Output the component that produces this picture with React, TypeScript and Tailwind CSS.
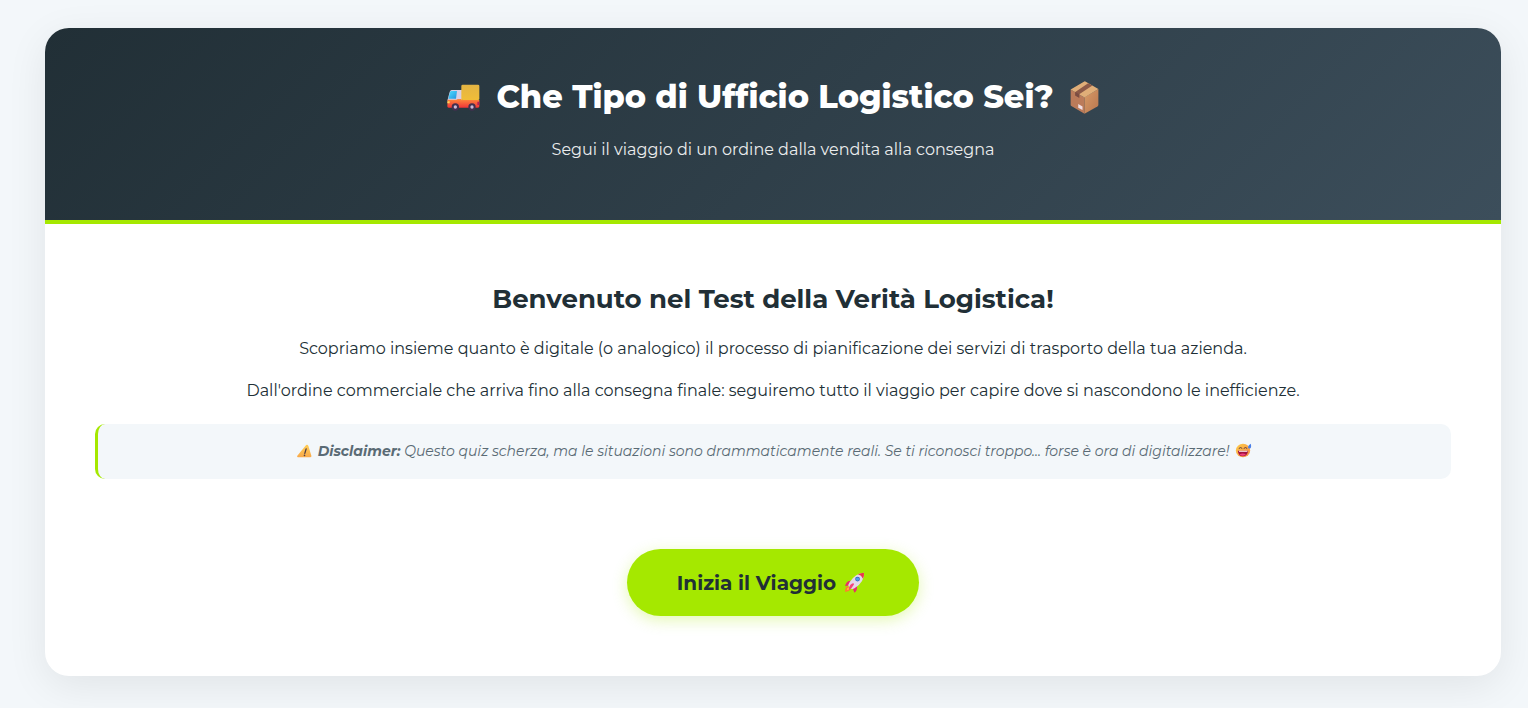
const TruckIcon = () => (
  <svg viewBox="20 46 99 81" className="h-[27px] w-[33px] shrink-0" aria-hidden="true">
    <defs>
      <linearGradient id="cargo" x1="0" y1="0" x2="0" y2="1">
        <stop offset="0" stopColor="#e3b443" />
        <stop offset="1" stopColor="#f0bd38" />
      </linearGradient>
      <linearGradient id="chassis" x1="0" y1="0" x2="0" y2="1">
        <stop offset="0" stopColor="#ff8a3c" />
        <stop offset="1" stopColor="#ef3438" />
      </linearGradient>
      <linearGradient id="glass" x1="0" y1="0" x2="1" y2="1">
        <stop offset="0" stopColor="#4fdcff" />
        <stop offset="1" stopColor="#2196e0" />
      </linearGradient>
    </defs>
    <path d="M34 64h31v32H21l7-26q2-6 6-6z" fill="#d8cfe6" />
    <path d="M33 67h17l-3 23H24l5-19q1-4 4-4z" fill="url(#glass)" />
    <path d="M22 93h26l4-2h12v3h53v19q0 4-4 4H25q-4 0-4-4z" fill="url(#chassis)" />
    <rect x="63" y="48" width="54" height="46" rx="4" fill="url(#cargo)" />
    <path d="M111 99h6v10h-6z" fill="#b81f55" />
    <path d="M21 98h7v6h-7z" fill="#ffd65a" />
    <circle cx="45" cy="115" r="11" fill="#42304f" />
    <circle cx="45" cy="115" r="5" fill="#c9bad7" />
    <circle cx="95" cy="115" r="11" fill="#42304f" />
    <circle cx="95" cy="115" r="5" fill="#c9bad7" />
  </svg>
);

const PackageIcon = () => (
  <svg viewBox="41 31 86 100" className="h-[33px] w-[29px] shrink-0" aria-hidden="true">
    <defs>
      <linearGradient id="boxRight" x1="0" y1="0" x2="1" y2="1">
        <stop offset="0" stopColor="#d89b67" />
        <stop offset="1" stopColor="#b8764f" />
      </linearGradient>
    </defs>
    <path d="M42 57l42 24v49L44 107q-2-1-2-4z" fill="#bb7b5a" />
    <path d="M126 55v48q0 3-3 5l-39 22V80z" fill="url(#boxRight)" />
    <path d="M42 57l40-24q3-2 6 0l38 22-42 26z" fill="#e0ae78" />
    <path d="M95 38l13 7-40 26v11l-12-7V64z" fill="#8d5a48" />
    <path d="M56 64l12 7v11l-12-7z" fill="#7b4c41" />
    <path d="M65 101l13 7v11l-13-7z" fill="#f1dfe5" />
  </svg>
);

const WarningIcon = () => (
  <svg viewBox="20 26 46 41" className="mr-1.5 inline h-[14px] w-[15px] align-[-2px]" aria-hidden="true">
    <defs>
      <linearGradient id="sign" x1="0" y1="0" x2="0" y2="1">
        <stop offset="0" stopColor="#ffce55" />
        <stop offset="1" stopColor="#f9a94a" />
      </linearGradient>
    </defs>
    <path d="M48 28q5-2 7 3l9 30q1 5-4 5H23q-4-1-2-5z" fill="url(#sign)" />
    <path d="M48 40l-4 14" stroke="#4e3d48" strokeWidth="4" strokeLinecap="round" />
    <circle cx="43" cy="60" r="2.5" fill="#4e3d48" />
  </svg>
);

const SweatSmileIcon = () => (
  <svg viewBox="38 22 51 46" className="ml-1.5 inline h-[15px] w-[17px] align-[-2px]" aria-hidden="true">
    <defs>
      <linearGradient id="face" x1="0" y1="0" x2="1" y2="1">
        <stop offset="0" stopColor="#ffcf4a" />
        <stop offset="1" stopColor="#f58a45" />
      </linearGradient>
    </defs>
    <ellipse cx="62" cy="45" rx="22" ry="21" fill="url(#face)" />
    <path d="M50 38q5-5 9 0M65 38q5-5 9 0" fill="none" stroke="#5a3440" strokeWidth="3" strokeLinecap="round" />
    <path d="M46 46h32q-3 17-17 17-13 0-15-17z" fill="#a3123f" />
    <path d="M49 46h27l-1 3H50z" fill="#fff" />
    <path d="M51 57q10-6 20 0-10 8-20 0z" fill="#f0407e" />
    <path d="M86 24q3 14-4 15-6 0-4-7 2-4 8-8z" fill="#4a7fe8" />
  </svg>
);

const RocketIcon = () => (
  <svg viewBox="32 24 62 62" className="mr-1 h-[21px] w-[21px] shrink-0" aria-hidden="true">
    <path d="M44 66q-9 2-9 16 12 1 17-8z" fill="#ff7d2e" />
    <path d="M45 69q-5 2-5 9 7 0 9-5z" fill="#ffb83b" />
    <path d="M52 50q-13 0-17 16l13-3zM70 65q3 12-7 20l-6-14z" fill="#e82e69" />
    <path d="M91 26q2 27-28 46-7 4-12 0l-5-5q-3-5 2-12 17-28 43-29z" fill="#e4d8ea" />
    <path d="M91 26q1 9-3 18-4-10-15-13 8-5 18-5z" fill="#e93849" />
    <circle cx="72" cy="45" r="7" fill="#3569b9" />
    <circle cx="72" cy="45" r="5" fill="#4c9fe8" />
    <path d="M59 57q4 1 2 5-6 11-14 15-2-8 4-15 4-5 8-5z" fill="#f3447b" />
  </svg>
);

function QuizHeader() {
  return (
    <header className="border-b-4 border-[#a5e800] bg-linear-135 from-[#212f36] to-[#3c4e5b] px-10 pt-[41px] pb-14 text-center text-white">
      <h1 className="flex items-center justify-center gap-4 text-[32px] leading-14 font-extrabold">
        <TruckIcon />
        <span>Che Tipo di Ufficio Logistico Sei?</span>
        <PackageIcon />
      </h1>
      <p className="mt-[11px] text-base leading-7 opacity-90">
        Segui il viaggio di un ordine dalla vendita alla consegna
      </p>
    </header>
  );
}

export default function App() {
  return (
    <div className="bg-[#f3f7fa] pt-7 pr-[27px] pb-8 pl-[45px] font-[Montserrat,Inter,sans-serif] text-[#212f36]">
      <main className="overflow-hidden rounded-3xl bg-white shadow-[0_10px_40px_rgba(0,0,0,0.08)]">
        <QuizHeader />
        <section className="px-[50px] pt-[54px] pb-[60px] text-center">
          <h2 className="text-[26px] leading-[42px] font-bold">Benvenuto nel Test della Verità Logistica!</h2>
          <p className="mt-[15px] text-base leading-7">
            Scopriamo insieme quanto è digitale (o analogico) il processo di pianificazione dei servizi di trasporto
            della tua azienda.
          </p>
          <p className="mt-3.5 text-base leading-7">
            Dall'ordine commerciale che arriva fino alla consegna finale: seguiremo tutto il viaggio per capire dove si
            nascondono le inefficienze.
          </p>
          <div className="mt-[19px] rounded-[10px] border-l-3 border-[#a5e800] bg-[#f3f7fa] px-4 py-4 text-sm leading-[23px] text-[#5a6b75] italic">
            <WarningIcon />
            <strong className="font-bold">Disclaimer:</strong> Questo quiz scherza, ma le situazioni sono
            drammaticamente reali. Se ti riconosci troppo... forse è ora di digitalizzare!
            <SweatSmileIcon />
          </div>
          <button
            type="button"
            className="mt-[70px] inline-flex h-[67px] cursor-pointer items-center gap-2 rounded-full bg-[#a5e800] px-[50px] text-xl font-bold shadow-[0_4px_15px_rgba(165,232,0,0.3)]"
          >
            Inizia il Viaggio
            <RocketIcon />
          </button>
        </section>
      </main>
    </div>
  );
}
